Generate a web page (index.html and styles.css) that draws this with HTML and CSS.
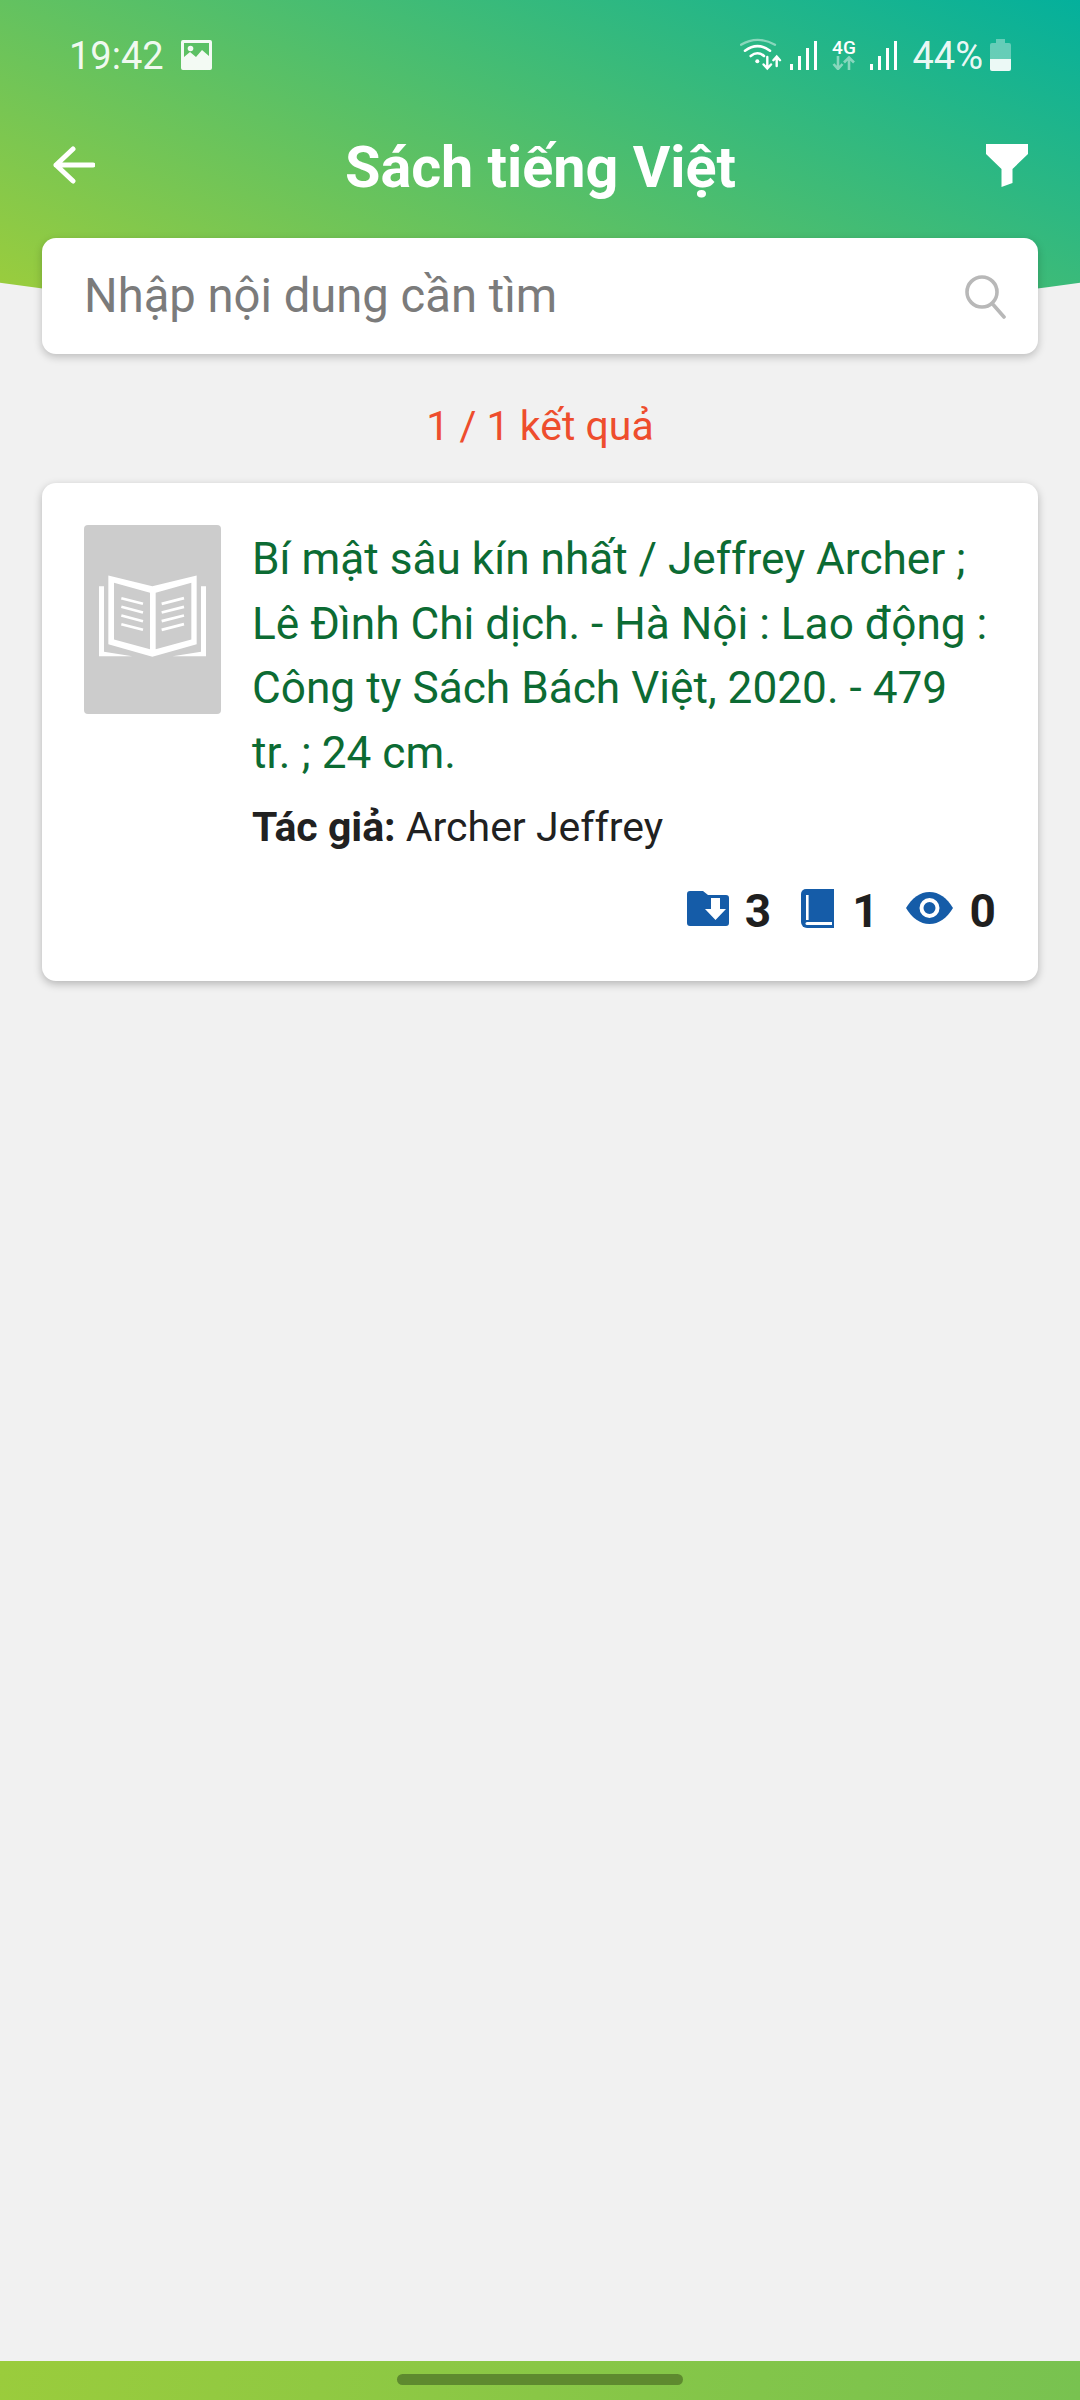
FILE: index.html
```html
<!DOCTYPE html>
<html lang="vi">
<head>
    <meta charset="UTF-8">
    <meta name="viewport" content="width=device-width, initial-scale=1.0">
    <title>Sách tiếng Việt</title>
    <link rel="stylesheet" href="styles.css">
</head>
<body>
    <div class="top">
        <div class="status_bar">
            <div class="status_left">
                <span class="status_text">19:42</span>
                <svg class="ic_image" viewBox="0 0 31 30" width="31" height="30">
                    <path fill-rule="evenodd" d="M2 0h27a2 2 0 0 1 2 2v26a2 2 0 0 1-2 2H2a2 2 0 0 1-2-2V2a2 2 0 0 1 2-2zM3 3v14l6-5 6 5 6-7 7 6V3z" fill="#fff"/>
                    <circle cx="9.5" cy="8.5" r="2.8" fill="#fff"/>
                </svg>
            </div>
            <div class="status_right">
                <svg class="ic_wifi" viewBox="0 0 42 34" width="42" height="34" fill="none" stroke="#fff" stroke-linecap="round">
                    <path d="M1 6.7Q17.5-3 35 6.7" stroke-width="2.4" opacity=".45"/>
                    <path d="M5 12.7Q17.5 3.5 30 12.7" stroke-width="2.6"/>
                    <path d="M10.7 18Q17.5 12.5 24 18" stroke-width="2.6"/>
                    <circle cx="17.3" cy="23.3" r="2" fill="#fff" stroke="none"/>
                    <path d="M27.3 19v11M23.6 26.5l3.7 4 3.7-4M36.7 28V19M33.4 22.2l3.3-3.6 3.3 3.6" stroke-width="2.4"/>
                </svg>
                <svg class="ic_bars" viewBox="0 0 27 29" width="27" height="29" fill="#fff">
                    <rect x="0" y="23" width="3" height="6"/><rect x="8" y="15" width="3" height="14"/>
                    <rect x="16" y="7" width="3" height="22"/><rect x="24" y="0" width="3" height="29"/>
                </svg>
                <div class="net_type">
                    <span class="net_label">4G</span>
                    <svg viewBox="0 0 23 14" width="23" height="14" fill="none" stroke="#fff" stroke-width="2.6" opacity=".45">
                        <path d="M6 0v12M1.5 8l4.5 5 4.500-5M17 14V2M12 6.500l5-5 5 5"/>
                    </svg>
                </div>
                <svg class="ic_bars2" viewBox="0 0 27 29" width="27" height="29" fill="#fff">
                    <rect x="0" y="23" width="3" height="6"/><rect x="8" y="15" width="3" height="14"/>
                    <rect x="16" y="7" width="3" height="22"/><rect x="24" y="0" width="3" height="29"/>
                </svg>
                <span class="status_text battery_text">44%</span>
                <svg class="ic_battery" viewBox="0 0 21 32" width="21" height="32" fill="#fff">
                    <path d="M6 0h9v4h4a2 2 0 0 1 2 2v14H0V6a2 2 0 0 1 2-2h4z" opacity=".35"/>
                    <path d="M0 20h21v10a2 2 0 0 1-2 2H2a2 2 0 0 1-2-2z" opacity=".92"/>
                </svg>
            </div>
        </div>

        <div class="toolbar">
            <svg class="ic_back" viewBox="0 0 42 38" width="42" height="38" fill="none" stroke="#fff" stroke-width="5" stroke-linecap="round" stroke-linejoin="round">
                <path d="M40 19H3M20 3L3 19l17 16"/>
            </svg>
            <h1 class="page_title">Sách tiếng Việt</h1>
            <svg class="ic_filter" viewBox="0 0 42 43" width="42" height="43" fill="#fff">
                <path d="M0 0h42v10L26.500 25v14l-11 4V25L0 10z"/>
            </svg>
        </div>

        <div class="search_box">
            <span class="search_hint">Nhập nội dung cần tìm</span>
            <svg class="ic_search" viewBox="0 0 42 44" width="42" height="44" fill="none" stroke="#b8b8b8" stroke-linecap="round">
                <circle cx="18" cy="17" r="15" stroke-width="3.600"/>
                <path d="M29.500 30L40 42" stroke-width="3.600"/>
            </svg>
        </div>
    </div>

    <div class="content">
        <div class="result_count">1 / 1 kết quả</div>

        <div class="book_card">
            <div class="book_cover">
                <svg viewBox="120 225 321 245" width="107" height="82" fill="#fff">
                    <path fill-rule="evenodd" d="M148 226L280 258 413 226V432L280 470 148 432zM165 248V418L273 447V278zM397 248L290 278V447L397 418z"/>
                    <path d="M120 258h15V455l85 13H120zM441 258h-15V455l-85 13H441z"/>
                    <g fill="none" stroke="#fff" stroke-width="8">
                        <path d="M187 294l65 17M187 320l65 17M187 346l65 17M187 372l65 17"/>
                        <path d="M375 294l-67 17M375 320l-67 17M375 346l-67 17M375 372l-67 17"/>
                    </g>
                </svg>
            </div>
            <div class="book_info">
                <div class="book_title">Bí mật sâu kín nhất / Jeffrey Archer ; Lê Đình Chi dịch. - Hà Nội : Lao động : Công ty Sách Bách Việt, 2020. - 479 tr. ; 24 cm.</div>
                <div class="book_author"><b>Tác giả:</b> Archer Jeffrey</div>
                <div class="book_stats">
                    <div class="stat">
                        <svg viewBox="0 0 42 35" width="42" height="35">
                            <path fill="#155ca8" d="M3 0h13l5 4h18a3 3 0 0 1 3 3v25a3 3 0 0 1-3 3H3a3 3 0 0 1-3-3V3a3 3 0 0 1 3-3z"/>
                            <path fill="#fff" d="M24 7h9v11h6L28.500 29 18 18h6z"/>
                        </svg>
                        <span>3</span>
                    </div>
                    <div class="stat stat_copies">
                        <svg viewBox="0 0 33 39" width="33" height="39">
                            <path fill="#155ca8" d="M5 0h28v39H6a6 6 0 0 1-6-6V5a5 5 0 0 1 5-5z"/>
                            <rect x="5" y="6" width="2.600" height="25" fill="#fff"/>
                            <path fill="#fff" d="M6 33h25v3H6a1.500 1.500 0 0 1 0-3z"/>
                        </svg>
                        <span>1</span>
                    </div>
                    <div class="stat stat_views">
                        <svg viewBox="0 0 47 32" width="47" height="32">
                            <path fill="#155ca8" d="M0 16C6 6 14 0 23.500 0S41 6 47 16C41 26 33 32 23.500 32S6 26 0 16z"/>
                            <circle cx="23.500" cy="16" r="8" fill="none" stroke="#fff" stroke-width="4"/>
                        </svg>
                        <span>0</span>
                    </div>
                </div>
            </div>
        </div>
    </div>

    <div class="nav_bar">
        <div class="nav_pill"></div>
    </div>
</body>
</html>
```

FILE: styles.css
```css
* {
    box-sizing: border-box;
}
html, body {
    margin: 0;
    height: 100%;
}
body {
    display: flex;
    flex-direction: column;
    min-height: 2400px;
    background-color: #f1f1f1;
    font-family: Roboto, "Noto Sans", sans-serif;
    overflow: hidden;
}

/* green curved header */
.top {
    position: relative;
    padding: 0 42px;
}
.top::before {
    content: "";
    position: absolute;
    top: 0;
    left: 0;
    right: 0;
    height: 330px;
    background: linear-gradient(25deg, #a2ce38 0%, #04b09c 100%);
    clip-path: ellipse(1167px 319px at 50% 0);
}
.status_bar {
    position: relative;
    display: flex;
    justify-content: space-between;
    align-items: center;
    height: 110px;
    margin: 0 -42px;
    padding: 0 69px;
}
.status_left, .status_right {
    display: flex;
    align-items: center;
}
.status_text {
    color: rgba(255, 255, 255, 0.93);
    font-size: 38px;
    line-height: 46px;
    padding-top: 2px;
}
.ic_image {
    margin-left: 17px;
    opacity: 0.93;
}
.ic_bars {
    margin-left: 8px;
}
.net_type {
    display: flex;
    flex-direction: column;
    align-items: center;
    margin-left: 15px;
    width: 23px;
}
.net_label {
    color: #fff;
    font-size: 19px;
    font-weight: 500;
    line-height: 16px;
}
.ic_bars2 {
    margin-left: 15px;
}
.battery_text {
    margin-left: 15px;
}
.ic_battery {
    margin-left: 7px;
}
.toolbar {
    position: relative;
    display: flex;
    justify-content: space-between;
    align-items: center;
    height: 110px;
    padding: 0 10px 0 11px;
}
.page_title {
    margin: 0;
    padding-top: 5px;
    color: #fff;
    font-size: 57.5px;
    font-weight: 700;
}
.search_box {
    position: relative;
    display: flex;
    justify-content: space-between;
    align-items: center;
    height: 116px;
    margin-top: 18px;
    padding: 0 32px 0 42px;
    background-color: #fff;
    border-radius: 14px;
    box-shadow: 0 3px 8px rgba(0, 0, 0, 0.22);
}
.search_hint {
    color: #7b7b7b;
    font-size: 47.2px;
}
.ic_search {
    margin-top: 2px;
}

/* result list */
.content {
    flex: 1;
    padding: 0 42px;
}
.result_count {
    height: 129px;
    padding-top: 14px;
    line-height: 116px;
    text-align: center;
    color: #ee4d2d;
    font-size: 41px;
}
.book_card {
    display: flex;
    gap: 31px;
    height: 498px;
    padding: 44px 42px 42px;
    background-color: #fff;
    border-radius: 14px;
    box-shadow: 0 3px 8px rgba(0, 0, 0, 0.25);
}
.book_cover {
    display: flex;
    flex: none;
    justify-content: center;
    align-items: center;
    width: 137px;
    height: 189px;
    margin-top: -2px;
    background-color: #ccc;
    border-radius: 4px;
}
.book_cover svg {
    margin-bottom: 8px;
}
.book_info {
    flex: 1;
}
.book_title {
    padding-right: 2px;
    color: #0c6b33;
    font-size: 44.2px;
    line-height: 64.5px;
}
.book_author {
    margin-top: 10px;
    color: #212121;
    font-size: 41px;
    line-height: 64px;
}
.book_stats {
    display: flex;
    justify-content: flex-end;
    gap: 30px;
    margin-top: 28px;
}
.stat {
    display: flex;
    align-items: center;
    gap: 16px;
    color: #1f1f1f;
    font-size: 46px;
    font-weight: 700;
    line-height: 48px;
}
.stat svg {
    margin-top: -6px;
}
.stat_copies {
    gap: 18px;
}
.stat_views {
    gap: 17px;
    margin-left: -3px;
}

/* gesture bar at the bottom */
.nav_bar {
    display: flex;
    justify-content: center;
    align-items: center;
    flex: none;
    height: 39px;
    padding-bottom: 3px;
    background: linear-gradient(100deg, #9acc3c 0%, #78c250 100%);
}
.nav_pill {
    width: 286px;
    height: 11px;
    background-color: #5e8a2f;
    border-radius: 6px;
}
```
